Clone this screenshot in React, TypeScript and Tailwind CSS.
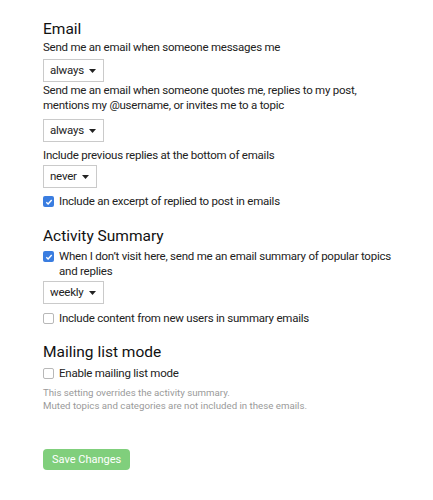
import type { ReactNode } from "react";

const body = "text-[11.5px] tracking-[-0.02em] leading-[15px] text-[#222]";

function Select({ value }: { value: string }) {
  return (
    <div className="flex h-[23px] w-fit items-center border border-[#cacaca] bg-white pl-[6px] pr-[7px] text-[11.5px] leading-none tracking-[-0.02em] text-[#222]">
      <span>{value}</span>
      <svg width="7" height="4" viewBox="0 0 7 4" className="ml-[5px] mt-[1px]">
        <path d="M0 0h7L3.5 4z" fill="#222" />
      </svg>
    </div>
  );
}

function Check({ checked, children }: { checked?: boolean; children: ReactNode }) {
  return (
    <div className={`flex items-start gap-[5px] ${body}`}>
      <span
        className={`mt-[2px] flex h-[11px] w-[11px] shrink-0 items-center justify-center rounded-[2px] ${
          checked ? "bg-[#3a7de0]" : "border border-[#b8b8b8] bg-white"
        }`}
      >
        {checked && (
          <svg width="8" height="8" viewBox="0 0 8 8">
            <path d="M1.3 4.2l1.8 1.8 3.6-4" fill="none" stroke="#fff" strokeWidth="1.4" />
          </svg>
        )}
      </span>
      <span>{children}</span>
    </div>
  );
}

function Label({ children }: { children: ReactNode }) {
  return <div className={body}>{children}</div>;
}

function Heading({ children }: { children: ReactNode }) {
  return <h2 className="text-[15.5px] leading-[20px] text-[#111]">{children}</h2>;
}

export default function App() {
  return (
    <div className="min-h-[500px] bg-white px-[43px] pt-[19px] font-['Roboto',sans-serif]">
      <section className="flex w-[360px] flex-col">
        <Heading>Email</Heading>
        <div className="mt-[1px]">
          <Label>Send me an email when someone messages me</Label>
        </div>
        <div className="mt-[4px]">
          <Select value="always" />
        </div>
        <div className="mt-[1px]">
          <Label>
            Send me an email when someone quotes me, replies to my post, mentions my
            @username, or invites me to a topic
          </Label>
        </div>
        <div className="mt-[6px]">
          <Select value="always" />
        </div>
        <div className="mt-[6px]">
          <Label>Include previous replies at the bottom of emails</Label>
        </div>
        <div className="mt-[2px]">
          <Select value="never" />
        </div>
        <div className="mt-[6px]">
          <Check checked>Include an excerpt of replied to post in emails</Check>
        </div>
      </section>

      <section className="mt-[17px] flex w-[360px] flex-col">
        <Heading>Activity Summary</Heading>
        <div className="mt-[3px]">
          <Check checked>
            When I don’t visit here, send me an email summary of popular topics and replies
          </Check>
        </div>
        <div className="mt-[2px]">
          <Select value="weekly" />
        </div>
        <div className="mt-[7px]">
          <Check>Include content from new users in summary emails</Check>
        </div>
      </section>

      <section className="mt-[16px] flex flex-col">
        <Heading>Mailing list mode</Heading>
        <div className="mt-[4px]">
          <Check>Enable mailing list mode</Check>
        </div>
        <p className="mt-[5px] text-[9.7px] leading-[13px] text-[#9a9a9a]">
          This setting overrides the activity summary.
          <br />
          Muted topics and categories are not included in these emails.
        </p>
      </section>

      <button className="mt-[37px] h-[21px] rounded-[4px] bg-[#80cf7c] px-[9px] text-[11px] leading-none text-white">
        Save Changes
      </button>
    </div>
  );
}
